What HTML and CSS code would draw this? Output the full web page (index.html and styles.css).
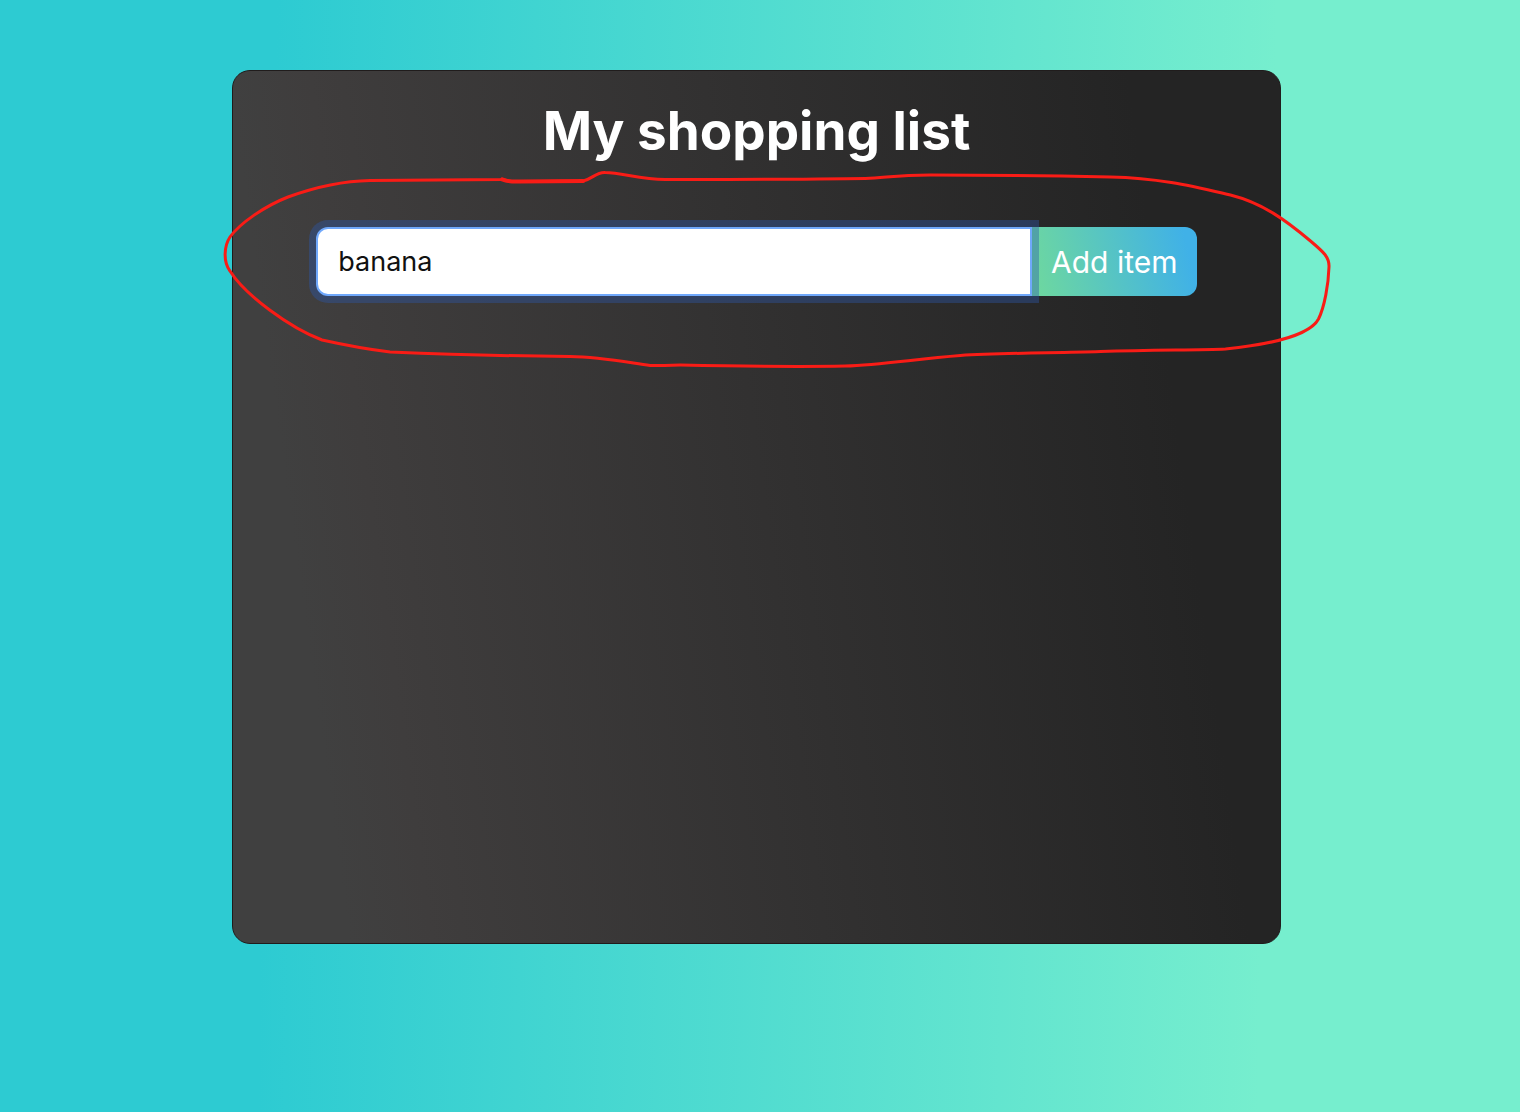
FILE: index.html
```html
<!DOCTYPE html>
<html lang="en">
<head>
  <meta charset="utf-8">
  <meta name="viewport" content="width=device-width, initial-scale=1">
  <title>My shopping list</title>
  <link rel="stylesheet" href="styles.css">
</head>
<body class="page">
  <main class="card">
    <h1 class="title">My shopping list</h1>
    <form class="add-form">
      <input class="item-input" type="text" value="banana" aria-label="Item">
      <button class="add-button" type="button">Add item</button>
    </form>
    <svg class="marker" viewBox="220 166 1112 204" preserveAspectRatio="none" aria-hidden="true">
      <path d="M502 179 C507 181 510 182 520 181.500 C545 182 560 181 583 181 C592 179 596 172 605 172.500 C622 173 640 179 665 179.500 C730 180 800 179 865 178.500 C885 178 895 175 930 175 C990 175 1060 176 1110 177 C1160 178 1195 187 1230 195 C1262 203 1285 220 1310 241 C1323 252 1329 257 1328.500 267 C1328 284 1324 307 1318 319 C1310 334 1275 344 1225 349 C1200 350 1160 350 1100 351.500 C1050 353 1000 353 960 355.500 C915 359 880 365 845 366 C790 367 730 366 680 365 C665 365 660 366 650 365.500 C625 362 600 357 570 356.500 C510 356 440 354 390 352 C365 349 340 344 322 340 C290 328 245 295 230 271 C223 262 224 246 230 237 C240 223 265 206 288 197 C310 189 340 181 370 180.500 L502 179.500"/>
      <path class="thick" d="M502 179.500 Q508 182 520 181.500 L583 181"/>
    </svg>
  </main>
</body>
</html>
```
FILE: styles.css
```css
* {
  box-sizing: border-box;
}

.page {
  margin: 0;
  min-height: 100vh;
  padding: 70px 7px 70px 0;
  background: linear-gradient(91deg, #2dcbd2 18%, #76eece 83%);
  font-family: Inter, "Liberation Sans", sans-serif;
}

.card {
  position: relative;
  width: 69.3%;
  min-height: 874px;
  margin: 0 auto;
  padding: 26px 83px;
  border: 1px solid #201c1c;
  border-radius: 18px;
  background: linear-gradient(82deg, #404040 10%, #3f3d3d 17%, #242424 87%);
}

.title {
  margin: 0 0 62px;
  color: #fff;
  font-size: 53px;
  font-weight: 700;
  line-height: 68px;
  text-align: center;
}

.add-form {
  display: flex;
  height: 69px;
}

.item-input {
  position: relative;
  z-index: 1;
  flex: 1;
  min-width: 0;
  padding: 0 20px;
  border: 2px solid #70a8fb;
  border-radius: 12px 0 0 12px;
  outline: 0;
  background: #fff;
  box-shadow: 0 0 0 7px rgba(44, 88, 170, 0.4);
  color: #111;
  font: 400 27px/36px Inter, "Liberation Sans", sans-serif;
}

.add-button {
  flex: none;
  width: 165px;
  padding: 0;
  border: 0;
  border-radius: 0 12px 12px 0;
  background: linear-gradient(76deg, #6fd99d, #40b1e7 92%);
  color: #fff;
  font: 400 30px/36px Inter, "Liberation Sans", sans-serif;
}

.marker {
  position: absolute;
  z-index: 2;
  top: 95px;
  left: -13px;
  width: calc(100% + 66px);
  height: 204px;
  overflow: visible;
  fill: none;
  stroke: #f91c16;
  stroke-width: 3;
  stroke-linecap: round;
  stroke-linejoin: round;
  pointer-events: none;
}

.thick {
  stroke-width: 4;
}
```
